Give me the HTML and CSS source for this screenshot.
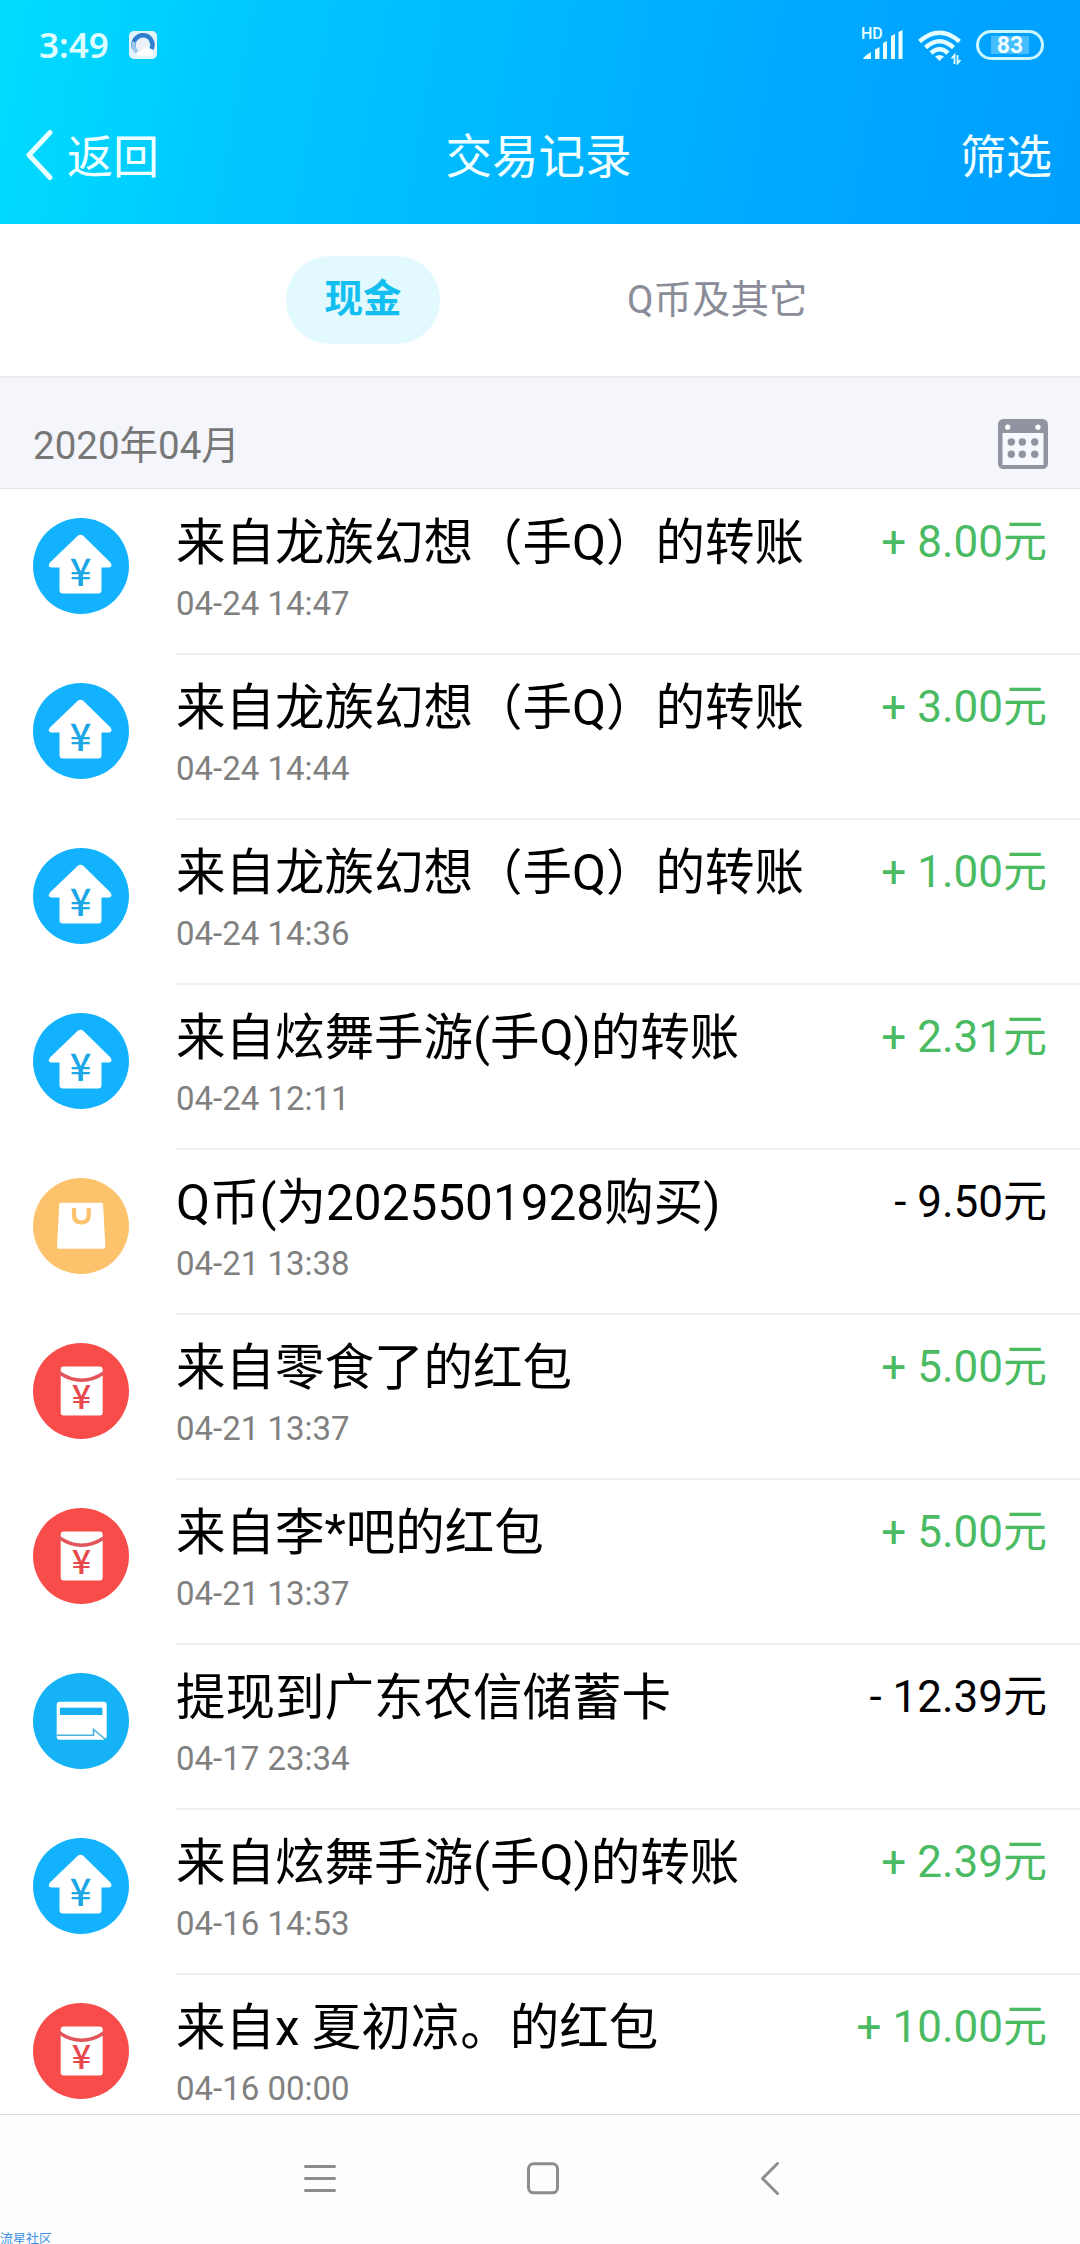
FILE: index.html
```html
<!DOCTYPE html>
<html lang="zh-CN">
<head>
    <meta charset="UTF-8">
    <meta name="viewport" content="width=device-width, initial-scale=1.0">
    <title>交易记录</title>
    <link rel="stylesheet" href="styles.css">
</head>
<body>

    <!-- Shared row icons -->
    <svg class="symbols">
        <symbol id="icon-transfer" viewBox="0 0 96 96">
            <circle cx="48" cy="48" r="48" fill="#12b2ff"/>
            <path d="M44.5 18 Q47.5 15.5 50.5 18 L77.5 44.5 Q80 49 76 49.5 H68.5 V72 Q68.5 75.5 65 75.5 H30 Q26.5 75.5 26.5 72 V49.5 H18.5 Q14 49 17 44.5 Z" fill="#fff"/>
            <text class="yen" x="47.7" y="68" font-size="38" fill="#1ba6e6">¥</text>
        </symbol>
        <symbol id="icon-bag" viewBox="0 0 96 96">
            <circle cx="48" cy="48" r="48" fill="#fdc26c"/>
            <path d="M28 24.7 H68.5 Q70 24.7 70.1 26.5 L72.4 69 Q72.4 70.7 70.7 70.7 H25.7 Q24 70.7 24 69 L26.3 26.5 Q26.4 24.7 28 24.7 Z" fill="#fff"/>
            <path d="M41 30 V37 Q41 44.5 48.3 44.5 Q55.7 44.5 55.7 37 V30" fill="none" stroke="#fdc26c" stroke-width="4.2"/>
        </symbol>
        <symbol id="icon-redpacket" viewBox="0 0 96 96">
            <circle cx="48" cy="48" r="48" fill="#f74c4a"/>
            <rect x="27.7" y="23.5" width="42" height="49" rx="3" fill="#fff"/>
            <path d="M26 29.5 Q48.5 45 71.5 29.5" fill="none" stroke="#e2555a" stroke-width="3.4"/>
            <text class="yen" x="48.4" y="65.7" font-size="34" fill="#e8484c">¥</text>
        </symbol>
        <symbol id="icon-card" viewBox="0 0 96 96">
            <circle cx="48" cy="48" r="48" fill="#15b2f6"/>
            <rect x="23.7" y="28.7" width="50" height="38" rx="3" fill="#fff"/>
            <rect x="27" y="34.7" width="42.3" height="7.3" fill="#15aef0"/>
            <path d="M23.7 62.3 H60.5 V56.5 L72 66" fill="none" stroke="#4bb3d8" stroke-width="1.6"/>
            <path d="M74 64 V68 H69.500 Z" fill="#15b2f6"/>
        </symbol>
    </svg>

    <header class="header">
        <div class="status-bar">
            <span class="clock">3:49</span>
            <svg class="app-icon" width="28" height="28" viewBox="0 0 28 28">
                <rect width="28" height="28" rx="5" fill="#e4f4fb"/>
                <path d="M5 17 A9.5 9.5 0 1 1 22.5 18" fill="none" stroke="#2f7fd0" stroke-width="4.5"/>
                <path d="M5 11 A9.5 9.5 0 0 0 8 21" fill="none" stroke="#9cc8ee" stroke-width="4"/>
                <circle cx="13.5" cy="14" r="5.5" fill="#eef1f8"/>
                <path d="M8 24.5 Q8 19 13 20 Q17 13 21 18 Q25 19 24 24.5 Z" fill="#fff"/>
            </svg>
            <div class="signal">
                <span class="hd">HD</span>
                <svg width="44" height="34" viewBox="0 0 44 34">
                    <path d="M3 31 Q4 28 11 24 V31 Z M15 21.5 L19.5 19 V31 H15 Z M23 15 L27 13 V31 H23 Z M31 8 L35 6 V31 H31 Z M38.5 4 L42.5 2 V31 H38.5 Z" fill="#eaffff"/>
                </svg>
            </div>
            <svg class="wifi" width="44" height="36" viewBox="0 0 44 36">
                <g fill="none" stroke="#e4fdff" stroke-width="4.4">
                    <path d="M1.5 12.5 Q21.500 -5 41.5 12.5"/>
                    <path d="M7.5 18.5 Q21.500 6 35.5 18.5"/>
                    <path d="M13 24 Q21.500 16.500 30 24"/>
                </g>
                <path d="M17 27.5 Q21.500 24.5 26 27.5 L21.500 32 Z" fill="#e4fdff"/>
                <path d="M36.5 35 V26 L33.500 29.500 M39.5 26 V34.500 L42.500 31" fill="none" stroke="#e4fdff" stroke-width="1.800"/>
            </svg>
            <span class="battery"><span class="battery-level">83</span></span>
        </div>
        <div class="title-bar">
            <div class="back">
                <svg width="28" height="52" viewBox="0 0 28 52">
                    <path d="M25 3.500 L4 26 L25 48.500" fill="none" stroke="#eaffff" stroke-width="5" stroke-linecap="round" stroke-linejoin="round"/>
                </svg>
                <span>返回</span>
            </div>
            <h1>交易记录</h1>
            <span class="filter">筛选</span>
        </div>
    </header>

    <nav class="tabs">
        <span class="tab active">现金</span>
        <span class="tab">Q币及其它</span>
    </nav>

    <div class="month">
        <span class="month-label">2020年04月</span>
        <svg width="50" height="50" viewBox="0 0 50 50">
            <rect width="50" height="50" rx="5.5" fill="#9193a0"/>
            <rect x="4.5" y="14" width="41" height="32" fill="#f6f8fd"/>
            <g fill="#fff">
                <circle cx="9.7" cy="8.2" r="2.6"/>
                <circle cx="40" cy="8.2" r="2.6"/>
            </g>
            <g fill="#9193a0">
                <circle cx="13.3" cy="23" r="3.7"/>
                <circle cx="24.3" cy="23" r="3.7"/>
                <circle cx="36.7" cy="23" r="3.7"/>
                <circle cx="13.3" cy="35.3" r="3.7"/>
                <circle cx="24.3" cy="35.3" r="3.7"/>
                <circle cx="36.7" cy="35.3" r="3.7"/>
            </g>
        </svg>
    </div>

    <ul class="records">
        <li class="record">
            <svg class="icon"><use href="#icon-transfer"/></svg>
            <div class="info">
                <div class="text"><p class="name">来自龙族幻想（手Q）的转账</p><p class="time">04-24 14:47</p></div>
                <span class="amount income">+ 8.00元</span>
            </div>
        </li>
        <li class="record">
            <svg class="icon"><use href="#icon-transfer"/></svg>
            <div class="info">
                <div class="text"><p class="name">来自龙族幻想（手Q）的转账</p><p class="time">04-24 14:44</p></div>
                <span class="amount income">+ 3.00元</span>
            </div>
        </li>
        <li class="record">
            <svg class="icon"><use href="#icon-transfer"/></svg>
            <div class="info">
                <div class="text"><p class="name">来自龙族幻想（手Q）的转账</p><p class="time">04-24 14:36</p></div>
                <span class="amount income">+ 1.00元</span>
            </div>
        </li>
        <li class="record">
            <svg class="icon"><use href="#icon-transfer"/></svg>
            <div class="info">
                <div class="text"><p class="name">来自炫舞手游(手Q)的转账</p><p class="time">04-24 12:11</p></div>
                <span class="amount income">+ 2.31元</span>
            </div>
        </li>
        <li class="record">
            <svg class="icon"><use href="#icon-bag"/></svg>
            <div class="info">
                <div class="text"><p class="name">Q币(为2025501928购买)</p><p class="time">04-21 13:38</p></div>
                <span class="amount">- 9.50元</span>
            </div>
        </li>
        <li class="record">
            <svg class="icon"><use href="#icon-redpacket"/></svg>
            <div class="info">
                <div class="text"><p class="name">来自零食了的红包</p><p class="time">04-21 13:37</p></div>
                <span class="amount income">+ 5.00元</span>
            </div>
        </li>
        <li class="record">
            <svg class="icon"><use href="#icon-redpacket"/></svg>
            <div class="info">
                <div class="text"><p class="name">来自李*吧的红包</p><p class="time">04-21 13:37</p></div>
                <span class="amount income">+ 5.00元</span>
            </div>
        </li>
        <li class="record">
            <svg class="icon"><use href="#icon-card"/></svg>
            <div class="info">
                <div class="text"><p class="name">提现到广东农信储蓄卡</p><p class="time">04-17 23:34</p></div>
                <span class="amount">- 12.39元</span>
            </div>
        </li>
        <li class="record">
            <svg class="icon"><use href="#icon-transfer"/></svg>
            <div class="info">
                <div class="text"><p class="name">来自炫舞手游(手Q)的转账</p><p class="time">04-16 14:53</p></div>
                <span class="amount income">+ 2.39元</span>
            </div>
        </li>
        <li class="record">
            <svg class="icon"><use href="#icon-redpacket"/></svg>
            <div class="info">
                <div class="text"><p class="name">来自x 夏初凉。的红包</p><p class="time">04-16 00:00</p></div>
                <span class="amount income">+ 10.00元</span>
            </div>
        </li>
    </ul>

    <!-- System navigation -->
    <footer class="system-nav">
        <svg width="48" height="48" viewBox="0 0 48 48">
            <path d="M9.5 12.5 H38.5 M9.5 24.5 H38.5 M9.5 36.5 H38.5"/>
        </svg>
        <svg width="48" height="48" viewBox="0 0 48 48">
            <rect x="7.5" y="9.8" width="29" height="29" rx="5"/>
        </svg>
        <svg width="48" height="48" viewBox="0 0 48 48">
            <path d="M31.5 9.5 L16.5 24.5 L31.5 39.5"/>
        </svg>
    </footer>
    <span class="watermark">流星社区</span>

</body>
</html>
```

FILE: styles.css
```css
* {
    box-sizing: border-box;
    margin: 0;
    padding: 0;
}

body {
    display: flex;
    flex-direction: column;
    width: 1080px;
    height: 2244px;
    overflow: hidden;
    position: relative;
    background-color: #fff;
    font-family: Roboto, "Noto Sans CJK SC", sans-serif;
    color: #000;
}

svg {
    display: block;
    flex-shrink: 0;
}

.symbols {
    display: none;
}

.yen {
    font-family: "Noto Sans CJK SC", sans-serif;
    font-weight: 500;
    text-anchor: middle;
}

/* --- Header --- */
.header {
    flex: none;
    height: 224px;
    background: linear-gradient(100deg, #00dcff 0%, #00c6ff 25%, #00b3ff 55%, #00a3ff 85%, #009fff 100%);
    color: #f0ffff;
}

.status-bar {
    display: flex;
    align-items: center;
    height: 90px;
    padding: 0 36px 0 39px;
}

.clock {
    width: 90px;
    font: 600 35px/40px "Noto Sans", sans-serif;
    color: #dffcff;
}

.signal {
    position: relative;
    margin-left: auto;
}

.hd {
    position: absolute;
    left: 1px;
    top: -3px;
    font: 500 16px/18px Roboto, sans-serif;
    color: #eaffff;
}

.wifi {
    margin: 3px 14px 0 14px;
}

.battery {
    display: flex;
    width: 68px;
    height: 30px;
    padding: 3px 12px;
    border: 3px solid #c9f6ff;
    border-radius: 15px;
}

.battery-level {
    width: 100%;
    background-color: #45bdff;
    font: 700 23px/19px Roboto, sans-serif;
    text-align: center;
}

.title-bar {
    display: grid;
    grid-template-columns: 1fr auto 1fr;
    align-items: center;
    height: 130px;
    padding: 0 28px 0 25px;
    font-size: 46px;
    line-height: 60px;
}

.title-bar span,
.title-bar h1 {
    padding-top: 3px;
}

.back {
    display: flex;
    align-items: center;
    gap: 14px;
}

.title-bar h1 {
    font-size: 46.5px;
    font-weight: 400;
}

.filter {
    text-align: right;
}

/* --- Tabs --- */
.tabs {
    display: flex;
    flex: none;
    align-items: center;
    gap: 156px;
    height: 154px;
    padding-left: 286px;
    border-bottom: 2px solid #ececec;
}

.tab {
    padding: 0 31px;
    border-radius: 44px;
    font-size: 38.5px;
    line-height: 84px;
    color: #8a8c98;
}

.tab.active {
    height: 88px;
    padding: 0 38.5px;
    background-color: #e2f9fd;
    color: #12bff0;
    font-weight: 700;
    line-height: 86px;
}

/* --- Month header --- */
.month {
    display: flex;
    flex: none;
    justify-content: space-between;
    align-items: center;
    height: 111px;
    padding: 22px 32px 0 33px;
    border-bottom: 1px solid #e3e4ea;
    background-color: #f4f6fb;
    font-size: 38.5px;
    color: #777;
}

.month-label {
    padding-bottom: 5px;
}

/* --- Transaction list --- */
.records {
    flex: 1;
    min-height: 0;
    padding-top: 1px;
    overflow: hidden;
    list-style: none;
}

.record {
    display: flex;
    height: 165px;
    padding-left: 33px;
}

.icon {
    width: 96px;
    height: 96px;
    margin: 28px 47px 0 0;
}

.info {
    display: flex;
    flex: 1;
    justify-content: space-between;
    padding: 21px 33px 0 0;
    border-bottom: 2px solid #efefef;
}

.name {
    font-size: 49.5px;
    line-height: 64px;
    white-space: nowrap;
}

.time {
    font-size: 33px;
    line-height: 58px;
    color: #808080;
}

.amount {
    font-size: 44px;
    line-height: 63px;
    white-space: nowrap;
}

.income {
    color: #4abb62;
}

/* --- Bottom navigation --- */
.system-nav {
    display: flex;
    flex: none;
    justify-content: space-between;
    align-items: center;
    height: 130px;
    padding: 0 286px 3px 296px;
    border-top: 1px solid #dcdcdc;
    background-color: #fdfdfd;
}

.system-nav svg {
    fill: none;
    stroke: #8d8d8d;
    stroke-width: 3;
    stroke-linecap: round;
    stroke-linejoin: round;
}

.watermark {
    position: absolute;
    left: 0;
    bottom: -4px;
    font-size: 13px;
    line-height: 19px;
    color: #3d8fe4;
}
```
